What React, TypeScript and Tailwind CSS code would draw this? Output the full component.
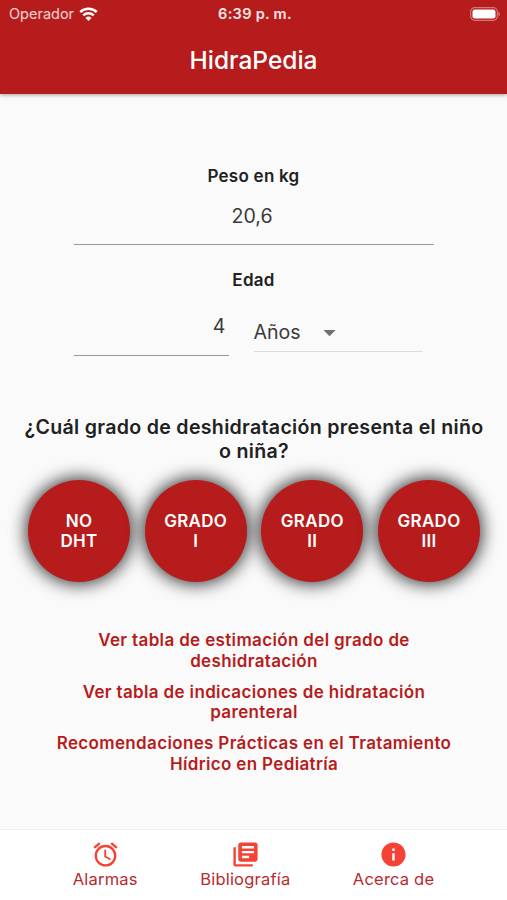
import { useState } from "react";
import type { ReactNode } from "react";
import { MdAccessAlarm, MdArrowDropDown, MdInfo, MdLibraryBooks } from "react-icons/md";

const grades = [
  ["NO", "DHT"],
  ["GRADO", "I"],
  ["GRADO", "II"],
  ["GRADO", "III"],
];

const links = [
  ["Ver tabla de estimación del grado de", "deshidratación"],
  ["Ver tabla de indicaciones de hidratación", "parenteral"],
  ["Recomendaciones Prácticas en el Tratamiento", "Hídrico en Pediatría"],
];

const WifiIcon = () => (
  <svg width="19" height="14" viewBox="0 0 19 14" fill="none" stroke="currentColor" strokeWidth="2.5">
    <path d="M1.2 5a12 12 0 0 1 16.6 0" />
    <path d="M4.3 8.3a7.5 7.5 0 0 1 10.4 0" />
    <path d="M9.5 14 6.5 11a4.3 4.3 0 0 1 6 0Z" fill="currentColor" stroke="none" />
  </svg>
);

const BatteryIcon = () => (
  <svg width="31" height="14" viewBox="0 0 31 14" fill="none">
    <rect x="0.7" y="0.7" width="26.6" height="12.6" rx="4" stroke="white" strokeOpacity="0.4" strokeWidth="1.2" />
    <rect x="2.5" y="2.5" width="23" height="9" rx="2.2" fill="white" />
    <path d="M28.5 4.7c1.6.6 1.6 4 0 4.6Z" fill="white" fillOpacity="0.5" />
  </svg>
);

const NavItem = ({ icon, label }: { icon: ReactNode; label: string }) => (
  <button className="flex flex-col items-center text-[#f44336]">
    {icon}
    <span className="text-[16.5px] leading-[21px] tracking-[0.2px] whitespace-nowrap text-[#b82a2e]">{label}</span>
  </button>
);

const App = () => {
  const [weight, setWeight] = useState("20,6");
  const [age, setAge] = useState("4");

  return (
    <div className="flex h-[900px] w-[507px] flex-col overflow-hidden bg-[#fafafa] font-['Inter',sans-serif] text-[#212121]">
      <header className="z-10 h-[93.5px] shrink-0 bg-[#b71c1c] text-white shadow-[0_1px_4px_rgba(0,0,0,0.35)]">
        <div className="grid h-7 grid-cols-3 items-center pr-[6px] pl-[9px] text-white">
          <div className="flex items-center gap-[5px]">
            <span className="text-[14.5px] text-white/80">Operador</span>
            <WifiIcon />
          </div>
          <span className="text-center text-[14.5px] font-semibold tracking-[0.3px] text-white/90">6:39 p. m.</span>
          <div className="flex justify-end">
            <BatteryIcon />
          </div>
        </div>
        <h1 className="pt-4 text-center text-[24.5px] leading-8 font-medium">HidraPedia</h1>
      </header>

      <main className="flex flex-1 flex-col items-center pt-[70.5px]">
        <label className="text-[17px] leading-6 font-semibold tracking-[0.25px]">Peso en kg</label>
        <input
          value={weight}
          onChange={(e) => setWeight(e.target.value)}
          className="mt-3 h-[45px] w-[360px] border-b border-[#999] pr-[3px] pb-[12px] text-center text-[19.6px] text-[#3a3a3a] outline-none"
        />

        <label className="mt-[23px] text-[17px] leading-6 font-semibold tracking-[0.25px]">Edad</label>
        <div className="flex w-[360px] items-end">
          <input
            value={age}
            onChange={(e) => setAge(e.target.value)}
            className="h-[64px] w-[155px] border-b border-[#999] pt-[4px] pr-[3px] text-right text-[19.6px] text-[#3a3a3a] outline-none"
          />
          <button className="mb-[4px] ml-[25px] flex h-[38px] w-[169px] items-center border-b border-[#ddd] pt-px text-[19.6px] text-[#3a3a3a]">
            <span>Años</span>
            <MdArrowDropDown size={29} className="mb-0.5 ml-[14px] text-[#707070]" />
          </button>
        </div>

        <h2 className="mt-[60px] pl-px text-center text-[19.6px] leading-[23.5px] font-semibold tracking-[0.3px]">
          ¿Cuál grado de deshidratación presenta el niño
          <br />o niña?
        </h2>

        <div className="mt-[17px] flex gap-[14.7px] pl-px">
          {grades.map(([top, bottom]) => (
            <button
              key={bottom}
              className="flex size-[102px] flex-col items-center justify-center rounded-full bg-[#b71c1c] text-[17px] leading-[20.5px] font-semibold tracking-[0.3px] text-white shadow-[0_0_17px_2px_rgba(0,0,0,0.8)]"
            >
              <span>{top}</span>
              <span>{bottom}</span>
            </button>
          ))}
        </div>

        <div className="mt-12 flex flex-col gap-[10.5px] pl-px text-center text-[17px] leading-[20.5px] font-semibold tracking-[0.35px] text-[#b71c1c]">
          {links.map(([first, second]) => (
            <a key={second} href="#">
              {first}
              <br />
              {second}
            </a>
          ))}
        </div>
      </main>

      <nav className="flex h-[71px] shrink-0 justify-center gap-[62.5px] border-t border-[#f0f0f0] bg-white pt-[10px]">
        <NavItem icon={<MdAccessAlarm size={29} />} label="Alarmas" />
        <NavItem icon={<MdLibraryBooks size={29} />} label="Bibliografía" />
        <NavItem icon={<MdInfo size={29} />} label="Acerca de" />
      </nav>
    </div>
  );
};

export default App;
